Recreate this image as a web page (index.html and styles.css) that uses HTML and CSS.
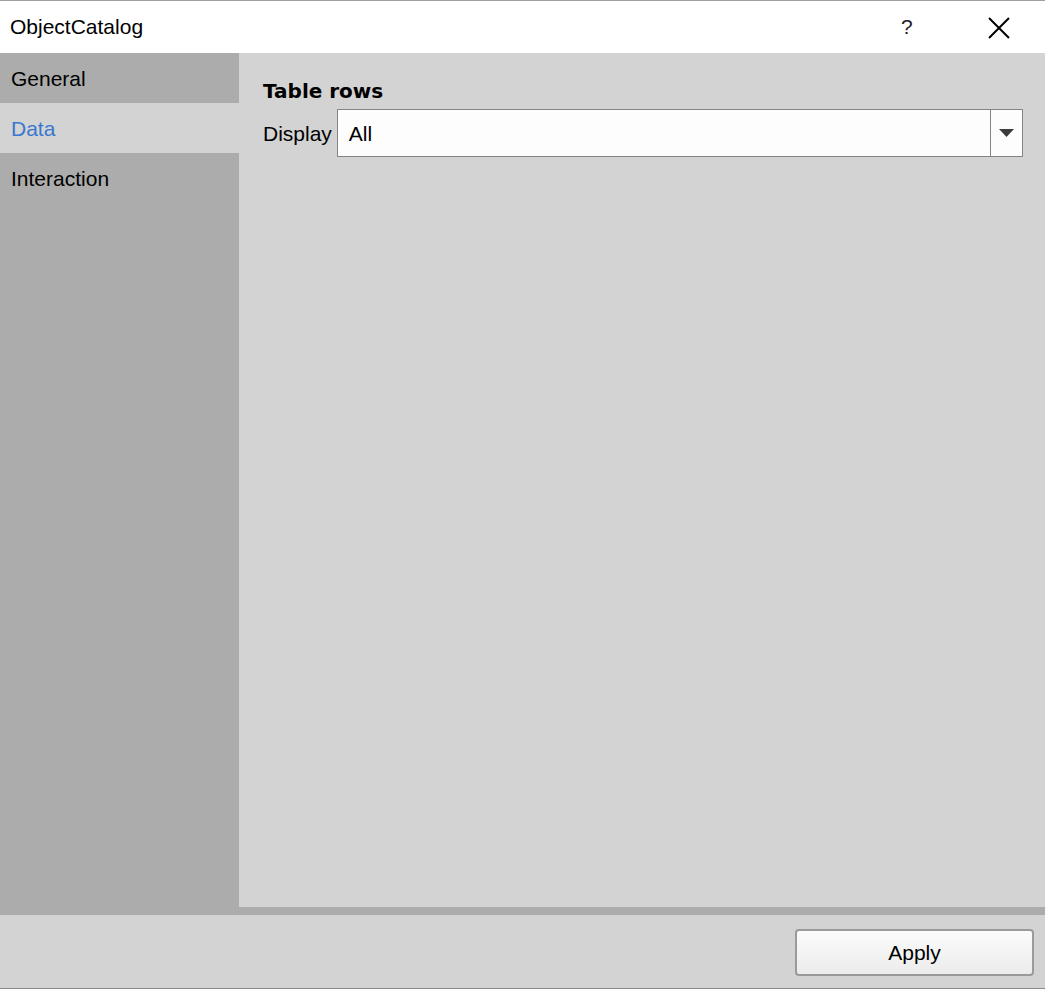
FILE: index.html
```html
<!DOCTYPE html>
<html lang="en">
<head>
    <meta charset="UTF-8">
    <title>ObjectCatalog</title>
    <link rel="stylesheet" href="styles.css">
</head>
<body>
    <div class="window">
        <div class="titlebar">
            <div class="title">ObjectCatalog</div>
            <div class="title-help">?</div>
            <div class="title-close">
                <svg width="22" height="22" viewBox="0 0 22 22">
                    <path d="M1 1 L21 21 M21 1 L1 21" stroke="#000" stroke-width="2" fill="none"/>
                </svg>
            </div>
        </div>

        <div class="main">
            <div class="sidebar">
                <div class="nav-item">General</div>
                <div class="nav-item active">Data</div>
                <div class="nav-item">Interaction</div>
            </div>

            <div class="content">
                <div class="section-title">Table rows</div>
                <div class="field-row">
                    <div class="field-label">Display</div>
                    <div class="combo">
                        <div class="combo-value">All</div>
                        <div class="combo-button">
                            <svg width="15" height="8" viewBox="0 0 15 8">
                                <path d="M0 0 L15 0 L7.5 8 Z" fill="#3c3c3c"/>
                            </svg>
                        </div>
                    </div>
                </div>
            </div>
        </div>

        <div class="footer">
            <button class="btn-apply">Apply</button>
        </div>
    </div>
</body>
</html>
```

FILE: styles.css
```css
html, body {
    margin: 0;
    padding: 0;
}

body {
    font-family: "Liberation Sans", Arial, sans-serif;
    font-size: 21px;
    color: #000;
    background: #d3d3d3;
}

.window {
    width: 1045px;
    height: 989px;
    box-sizing: border-box;
    display: flex;
    flex-direction: column;
    border-top: 1px solid #a0a0a0;
    border-bottom: 1px solid #8a8a8a;
}

.titlebar {
    height: 52px;
    flex: none;
    background: #fff;
    display: flex;
    align-items: center;
}

.title {
    flex: 1;
    padding-left: 10px;
}

.title-help {
    width: 20px;
    margin-right: 67px;
    color: #1e1e2a;
}

.title-close {
    width: 22px;
    height: 22px;
    margin-right: 35px;
    margin-top: 1px;
}

.title-close svg {
    display: block;
}

.main {
    flex: 1;
    display: flex;
    background: #acacac;
}

.sidebar {
    width: 239px;
    flex: none;
}

.nav-item {
    height: 50px;
    box-sizing: border-box;
    padding: 1px 0 0 11px;
    display: flex;
    align-items: center;
}

.nav-item.active {
    background: #d3d3d3;
    color: #3a78d0;
}

.content {
    flex: 1;
    background: #d3d3d3;
    margin-bottom: 8px;
    padding: 26px 22px 0 24px;
}

.section-title {
    font-family: "DejaVu Sans", Verdana, sans-serif;
    font-weight: bold;
    font-size: 20px;
    line-height: 24px;
    margin-bottom: 6px;
}

.field-row {
    display: flex;
    align-items: center;
    gap: 5px;
}

.field-label {
    padding-top: 1px;
}

.combo {
    flex: 1;
    height: 48px;
    box-sizing: border-box;
    display: flex;
    background: #fdfdfd;
    border: 1px solid #858585;
}

.combo-value {
    flex: 1;
    padding: 1px 0 0 11px;
    display: flex;
    align-items: center;
}

.combo-button {
    width: 31px;
    border-left: 1px solid #858585;
    display: flex;
    align-items: center;
    justify-content: center;
}

.combo-button svg {
    display: block;
}

.footer {
    height: 73px;
    flex: none;
    display: flex;
    align-items: center;
    justify-content: flex-end;
    padding-right: 11px;
    padding-top: 1px;
    box-sizing: border-box;
}

.btn-apply {
    width: 239px;
    height: 47px;
    font-family: "Liberation Sans", Arial, sans-serif;
    font-size: 21px;
    color: #000;
    background: linear-gradient(to bottom, #fbfbfb 0%, #ececec 100%);
    border: 2px solid #9a9a9a;
    border-radius: 4px;
    padding: 2px 0 0;
}
```
